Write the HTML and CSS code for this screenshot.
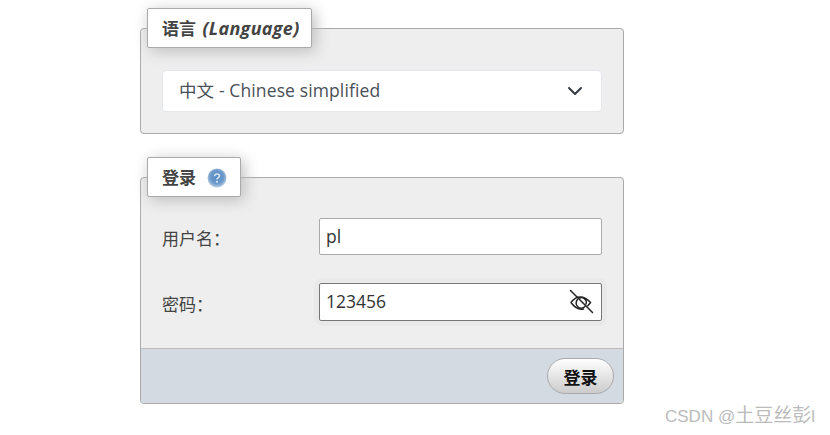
FILE: index.html
```html
<!DOCTYPE html>
<html lang="zh-CN">

<head>
    <meta charset="UTF-8">
    <meta name="viewport" content="width=device-width, initial-scale=1.0">
    <title>登录</title>
    <link rel="stylesheet" href="styles.css">
</head>

<body>
    <div class="container">
        <fieldset class="panel panel-language">
            <legend><span>语言 <em>(Language)</em></span></legend>
            <div class="select-box">
                <span>中文 - Chinese simplified</span>
                <svg class="chevron" width="16" height="16" viewBox="0 0 16 16">
                    <path d="M2 5l6 6 6-6" fill="none" stroke="#343a40" stroke-width="2" stroke-linecap="round" stroke-linejoin="round" />
                </svg>
            </div>
        </fieldset>

        <fieldset class="panel panel-login">
            <legend><span>登录</span><svg class="help" width="20" height="20" viewBox="0 0 20 20">
                    <defs>
                        <radialGradient id="helpFill" cx="50%" cy="45%" r="55%">
                            <stop offset="0" stop-color="#4f86c0" />
                            <stop offset="0.65" stop-color="#6f9bcb" />
                            <stop offset="1" stop-color="#bcd0e6" />
                        </radialGradient>
                    </defs>
                    <circle cx="10" cy="10" r="9.500" fill="url(#helpFill)" />
                    <path d="M7.600 8.200c0-1.400 1-2.200 2.400-2.200s2.400.8 2.400 2c0 1.900-2.400 1.700-2.400 3.400" fill="none" stroke="#d5e2f0" stroke-width="1.700" />
                    <circle cx="10" cy="13.800" r="1.100" fill="#d5e2f0" />
                </svg></legend>
            <div class="form-row">
                <label for="username">用户名：</label>
                <input id="username" type="text" value="pl">
            </div>
            <div class="form-row form-row-password">
                <label for="password">密码：</label>
                <div class="password-box">
                    <input id="password" type="text" value="123456">
                    <svg class="eye" width="26" height="26" viewBox="0 0 26 26">
                        <g fill="none" stroke="#222" stroke-width="1.500" stroke-linecap="round">
                            <path d="M3 13.500c2.500-3.400 5.500-5.500 9-5.500s7.500 2 10.500 5.500c-.8 1.200-1.700 2.300-2.700 3.200M15.500 20c-4.500.8-9-1.500-12.500-6.500" />
                            <path d="M17 17.500a4.800 4.800 0 0 1-7.500-7M11.500 9a4.800 4.800 0 0 1 6.500 6" />
                            <path d="M2.500 1.500l22 22" />
                        </g>
                    </svg>
                </div>
            </div>
            <div class="panel-footer">
                <button type="button">登录</button>
            </div>
        </fieldset>
    </div>
    <div class="watermark">CSDN @<span class="watermark-name">土豆丝彭</span>l</div>
</body>

</html>
```

FILE: styles.css
```css
body {
    font-family: "Open Sans", "Noto Sans CJK SC", sans-serif;
    font-size: 17px;
    color: #444;
    background-color: #fff;
    margin: 0;
    height: 435px;
    overflow: hidden;
    position: relative;
}

.container {
    width: 484px;
    margin-left: 140px;
    padding-top: 8px;
}

.panel {
    margin: 0;
    padding: 0;
    background: #eee;
    border: 1px solid #aaa;
    border-radius: 4px;
    box-sizing: border-box;
    min-width: 0;
}

.panel legend {
    box-sizing: border-box;
    height: 40px;
    margin-left: 6px;
    padding: 0 13px 2px 14px;
    display: flex;
    align-items: center;
    background: #fff;
    border: 1px solid #aaa;
    border-radius: 2px;
    box-shadow: 3px 3px 15px #bbb;
    font-size: 17px;
    font-weight: bold;
}

.panel legend em {
    font-style: italic;
    letter-spacing: 0.3px;
    font-size: 18px;
    margin-left: 2px;
}

.panel-language {
    height: 126px;
    padding: 22px 21px 0;
}

.panel-language legend {
    width: 165px;
    margin-left: -15px;
    white-space: nowrap;
}

.select-box {
    height: 42px;
    box-sizing: border-box;
    padding: 0 18px 3px 16px;
    display: flex;
    align-items: center;
    justify-content: space-between;
    background: #fff;
    border: 1px solid #e3e6ea;
    border-radius: 4px;
    font-size: 17.5px;
    letter-spacing: 0.12px;
    color: #495057;
}

.chevron {
    position: relative;
    top: 1px;
}

.panel-login {
    margin-top: 23px;
}

.panel-login legend {
    width: 94px;
    gap: 11px;
}

.help {
    flex: none;
    position: relative;
    top: 2px;
}

.form-row {
    display: flex;
    align-items: center;
    padding: 0 21px;
    margin-top: 21px;
}

.form-row-password {
    margin-top: 28px;
}

.form-row label {
    width: 157px;
    flex: none;
    position: relative;
    top: 1px;
}

.form-row input {
    box-sizing: border-box;
    width: 283px;
    height: 37px;
    padding: 0 6px 2px;
    background: #fff;
    border: 1px solid #aaa;
    border-radius: 2px;
    font: 17.5px "Open Sans", sans-serif;
    color: #333;
    outline: none;
}

.password-box {
    position: relative;
    display: flex;
    border-radius: 4px;
    box-shadow: 0 0 0 5px #e9e9e9;
}

.password-box input {
    height: 38px;
    padding-bottom: 3px;
    border-color: #777;
}

.eye {
    position: absolute;
    right: 8px;
    top: 6px;
}

.panel-footer {
    margin-top: 27px;
    height: 55px;
    box-sizing: border-box;
    padding: 9px 9px 0 0;
    display: flex;
    justify-content: flex-end;
    align-items: flex-start;
    background: #d3dae2;
    border-top: 1px solid #bbb;
    border-radius: 0 0 3px 3px;
}

button {
    width: 67px;
    height: 36px;
    padding: 0;
    background: linear-gradient(#fff, #ccc);
    border: 1px solid #aaa;
    border-radius: 18px;
    font-family: inherit;
    font-size: 17px;
    font-weight: bold;
    color: #111;
}

.watermark {
    position: absolute;
    left: 665px;
    top: 400px;
    font-family: "Liberation Sans", "Noto Sans CJK SC", sans-serif;
    font-size: 17px;
    color: #bbb;
    white-space: nowrap;
}

.watermark-name {
    font-size: 19px;
}
```
